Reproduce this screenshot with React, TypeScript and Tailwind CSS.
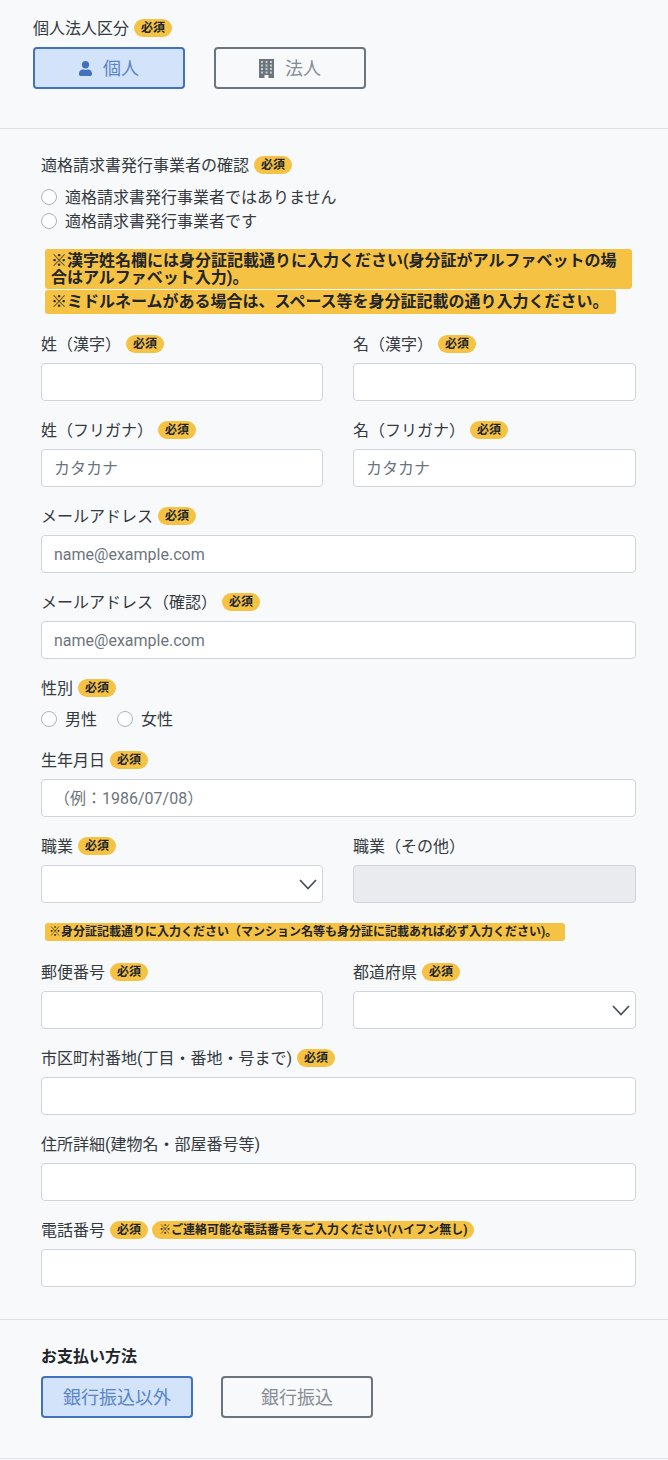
import type { ReactNode } from "react";
import { FaUser } from "react-icons/fa";

const FONT = "font-['Roboto','Noto_Sans_CJK_JP',sans-serif]";

function Required({ children = "必須" }: { children?: ReactNode }) {
  return (
    <span className="inline-flex h-[18px] items-center rounded-full bg-[#f6c244] px-[7px] text-[12px] font-bold leading-none text-[#212529]">
      {children}
    </span>
  );
}

function Label({ text, required, note }: { text: string; required?: boolean; note?: string }) {
  return (
    <div className="mb-[7px] flex h-[24px] items-center gap-[5px] text-[16px] leading-[24px] text-[#343a40]">
      <span className="pt-[2px]">{text}</span>
      {required && <Required />}
      {note && <span className="-ml-[1px] flex"><Required>{note}</Required></span>}
    </div>
  );
}

function TextInput({ placeholder, disabled }: { placeholder?: string; disabled?: boolean }) {
  return (
    <input
      disabled={disabled}
      placeholder={placeholder}
      className="block h-[38px] w-full rounded-[4px] border border-[#ced4da] bg-white px-[12px] text-[16px] text-[#343a40] outline-none placeholder:text-[#6c757d] disabled:bg-[#e9ebef]"
    />
  );
}

function SelectBox() {
  return (
    <div className="relative">
      <select className="block h-[38px] w-full appearance-none rounded-[4px] border border-[#ced4da] bg-white px-[12px] text-[16px] outline-none">
        <option></option>
      </select>
      <svg viewBox="0 0 18 11" className="pointer-events-none absolute right-[6px] top-[14px] h-[11px] w-[18px]" fill="none" stroke="#495057" strokeWidth="1.7">
        <path d="M1 1l8 8.500L17 1" />
      </svg>
    </div>
  );
}

function Field({ label, required, placeholder, note, children }: { label: string; required?: boolean; placeholder?: string; note?: string; children?: ReactNode }) {
  return (
    <div className="mb-[17px] min-w-0">
      <Label text={label} required={required} note={note} />
      {children ?? <TextInput placeholder={placeholder} />}
    </div>
  );
}

function Radio({ label }: { label: string }) {
  return (
    <label className="flex h-[24px] items-center gap-[8px] text-[16px] text-[#343a40]">
      <span className="h-[16px] w-[16px] rounded-full border border-[#adb5bd] bg-white" />
      <span className="pt-[1px]">{label}</span>
    </label>
  );
}

function ToggleButton({ active, children }: { active?: boolean; children: ReactNode }) {
  return (
    <button
      className={
        active
          ? "flex h-[42px] w-[152px] items-center justify-center gap-[11px] rounded-[4px] border-2 border-[#4272bd] bg-[#d2e3fa] text-[18px] text-[#5a85c6]"
          : "flex h-[42px] w-[152px] items-center justify-center gap-[11px] rounded-[4px] border-2 border-[#6c757d] bg-transparent text-[18px] text-[#858c93]"
      }
    >
      {children}
    </button>
  );
}

// grid of small windows with a door notch, FontAwesome's is too coarse here
function BuildingIcon() {
  const windows = [2, 5.5, 9, 12.5].flatMap((y) => [2, 6.5, 11].map((x) => ({ x, y })));
  return (
    <svg viewBox="0 0 15 19" className="h-[19px] w-[15px]">
      <path d="M0 0h15v19H9.500v-3h-4v3H0z" fill="#6c757d" />
      {windows.map((w) => (
        <rect key={`${w.x}-${w.y}`} x={w.x} y={w.y} width="2" height="2" fill="#c4c8cd" />
      ))}
    </svg>
  );
}

export default function App() {
  return (
    <div className={`${FONT} min-h-[1460px] w-[668px] bg-[#f8f9fb]`}>
      <div className="h-[129px] border-b border-[#dee2e6] px-[33px] pt-[16px]">
        <Label text="個人法人区分" required />
        <div className="flex gap-[29px]">
          <ToggleButton active>
            <FaUser className="h-[15px] w-[13px] text-[#4272bd]" />
            個人
          </ToggleButton>
          <ToggleButton>
            <BuildingIcon />
            法人
          </ToggleButton>
        </div>
      </div>

      <div className="h-[1191px] border-b border-[#dee2e6] pl-[41px] pr-[32px] pt-[24px]">
        <Label text="適格請求書発行事業者の確認" required />
        <div className="pt-[1px]">
          <Radio label="適格請求書発行事業者ではありません" />
          <Radio label="適格請求書発行事業者です" />
        </div>

        <div className="mb-[18px] ml-[4px] mt-[16px]">
          <p className="w-[587px] rounded-[3px] bg-[#f6c244] px-[6px] py-[3px] text-[16px] font-bold leading-[17px] text-[#212529]">
            ※漢字姓名欄には身分証記載通りに入力ください(身分証がアルファベットの場合はアルファベット入力)。
          </p>
          <p className="mt-[1px] w-[571px] rounded-[3px] bg-[#f6c244] px-[6px] py-[4px] text-[16px] font-bold leading-[16px] text-[#212529]">
            ※ミドルネームがある場合は、スペース等を身分証記載の通り入力ください。
          </p>
        </div>

        <div className="grid grid-cols-[282px_283px] gap-x-[30px]">
          <Field label="姓（漢字）" required />
          <Field label="名（漢字）" required />
          <Field label="姓（フリガナ）" required placeholder="カタカナ" />
          <Field label="名（フリガナ）" required placeholder="カタカナ" />
        </div>
        <Field label="メールアドレス" required placeholder="name@example.com" />
        <Field label="メールアドレス（確認）" required placeholder="name@example.com" />

        <Label text="性別" required />
        <div className="mb-[17px] flex gap-[20px]">
          <Radio label="男性" />
          <Radio label="女性" />
        </div>

        <Field label="生年月日" required placeholder="（例：1986/07/08）" />

        <div className="grid grid-cols-[282px_283px] gap-x-[30px]">
          <Field label="職業" required>
            <SelectBox />
          </Field>
          <Field label="職業（その他）">
            <TextInput disabled />
          </Field>
        </div>

        <p className="mb-[19px] ml-[4px] mt-[3px] flex h-[18px] w-[520px] items-center rounded-[3px] bg-[#f6c244] px-[4px] text-[12px] font-bold leading-none text-[#212529]">
          ※身分証記載通りに入力ください（マンション名等も身分証に記載あれば必ず入力ください)。
        </p>

        <div className="grid grid-cols-[282px_283px] gap-x-[30px]">
          <Field label="郵便番号" required />
          <Field label="都道府県" required>
            <SelectBox />
          </Field>
        </div>
        <Field label="市区町村番地(丁目・番地・号まで)" required />
        <Field label="住所詳細(建物名・部屋番号等)" />
        <Field label="電話番号" required note="※ご連絡可能な電話番号をご入力ください(ハイフン無し)" />
      </div>

      <div className="h-[139px] border-b border-[#dee2e6] pl-[41px] pt-[24px]">
        <div className="mb-[8px] h-[24px] pt-[1px] text-[16px] font-bold leading-[24px] text-[#212529]">お支払い方法</div>
        <div className="flex gap-[28px]">
          <ToggleButton active>銀行振込以外</ToggleButton>
          <ToggleButton>銀行振込</ToggleButton>
        </div>
      </div>
    </div>
  );
}
